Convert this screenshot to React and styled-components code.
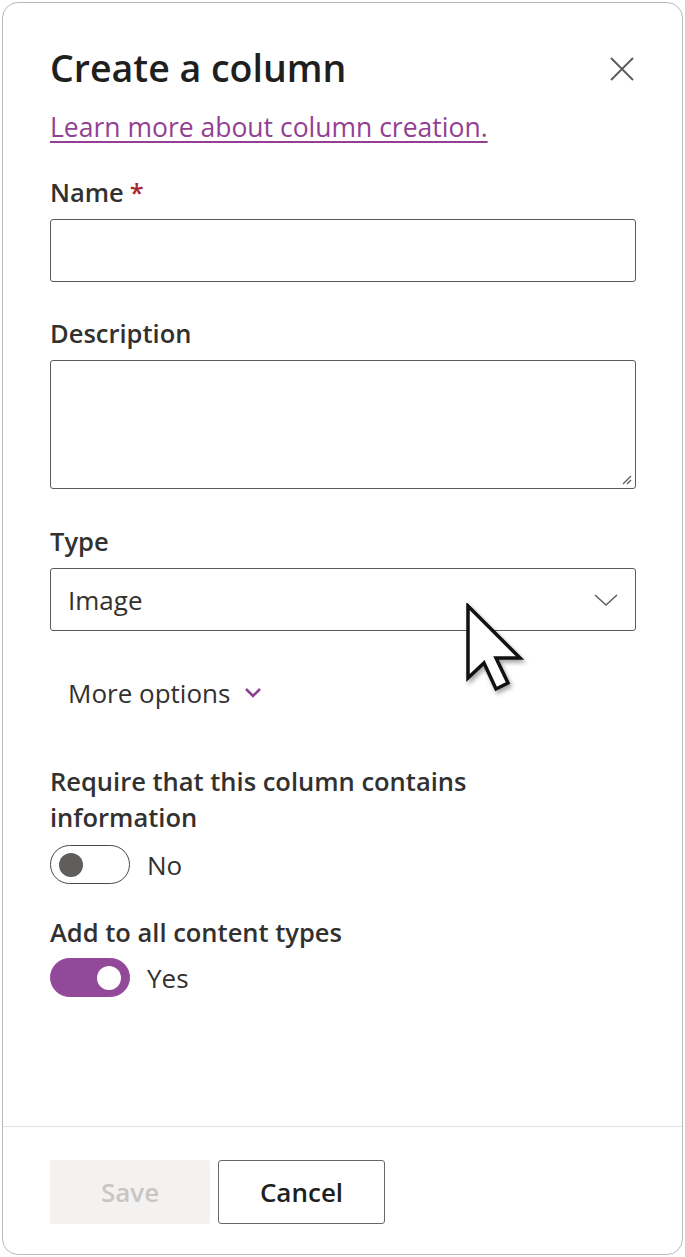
import React from 'react'
import styled, { createGlobalStyle } from 'styled-components'

const GlobalStyle = createGlobalStyle`
  html, body {
    margin: 0;
    padding: 0;
    background: #fff;
  }
  body {
    font-family: 'Open Sans', 'Liberation Sans', sans-serif;
    color: #252423;
  }
`

const Panel = styled.div`
  position: relative;
  box-sizing: border-box;
  margin: 2px;
  width: 681px;
  height: 1253px;
  border: 1.5px solid #b9b9b9;
  border-radius: 16px;
  display: flex;
  flex-direction: column;
  overflow: hidden;
`

const Body = styled.div`
  flex: 1;
  padding: 38px 47px 0 47px;
  display: flex;
  flex-direction: column;
`

const Header = styled.div`
  display: flex;
  align-items: center;
  justify-content: space-between;
  height: 52px;
`

const Title = styled.h1`
  margin: 0;
  font-size: 37.5px;
  font-weight: 600;
  color: #201f1e;
`

const CloseButton = styled.button`
  border: none;
  background: none;
  padding: 0;
  margin: 4px -2px 0 0;
  width: 30px;
  height: 30px;
  display: flex;
  align-items: center;
  justify-content: center;
`

const HelpLink = styled.a`
  display: block;
  align-self: flex-start;
  margin-top: 16px;
  line-height: 36px;
  font-size: 26.5px;
  color: #933f92;
  text-decoration: underline;
  text-underline-offset: 4px;
  text-decoration-thickness: 1.5px;
`

const Label = styled.div`
  margin-top: ${p => p.$top || 0}px;
  font-size: 25.5px;
  font-weight: 600;
  color: #323130;
  line-height: 36px;
`

const Required = styled.span`
  color: #a4262c;
  margin-left: 6px;
`

const Field = styled.div`
  position: relative;
  margin-top: 9px;
  box-sizing: border-box;
  width: 586px;
  height: ${p => p.$h}px;
  border: 1.5px solid #5b5a59;
  border-radius: 3px;
  background: #fff;
  display: flex;
  align-items: center;
  padding: 0 16px 0 17px;
`

const SelectValue = styled.span`
  flex: 1;
  font-size: 26px;
  color: #323130;
`

const Grip = styled.svg`
  position: absolute;
  right: 2px;
  bottom: 2px;
`

const Cursor = styled.svg`
  position: absolute;
  left: 413px;
  top: 34px;
  filter: drop-shadow(2px 3px 2px rgba(0, 0, 0, 0.35));
`

const MoreOptions = styled.div`
  margin-top: 44px;
  margin-left: 18px;
  display: flex;
  align-items: center;
  gap: 14px;
  line-height: 36px;
  font-size: 26px;
  color: #323130;
`

const ToggleRow = styled.div`
  display: flex;
  align-items: center;
  gap: 17px;
  margin-top: ${p => p.$top}px;
  font-size: 26px;
  color: #323130;
`

const Track = styled.div`
  box-sizing: border-box;
  width: 80px;
  height: 39px;
  border-radius: 20px;
  border: 1.5px solid ${p => (p.$on ? '#93499a' : '#4a4948')};
  background: ${p => (p.$on ? '#93499a' : '#fff')};
  display: flex;
  align-items: center;
  justify-content: ${p => (p.$on ? 'flex-end' : 'flex-start')};
  padding: 0 8px;
`

const Knob = styled.div`
  width: 24px;
  height: 24px;
  border-radius: 50%;
  background: ${p => (p.$on ? '#fff' : '#5f5e5d')};
`

const Footer = styled.div`
  border-top: 1.5px solid #e3e3e3;
  height: 128px;
  box-sizing: border-box;
  padding: 33px 47px 0 47px;
  display: flex;
  gap: 8px;
`

const Button = styled.button`
  box-sizing: border-box;
  height: 64px;
  width: ${p => p.$w}px;
  border-radius: 3px;
  font-family: inherit;
  font-size: 26px;
  font-weight: 600;
  border: ${p => (p.$disabled ? 'none' : '1.5px solid #6a6968')};
  background: ${p => (p.$disabled ? '#f3f2f1' : '#fff')};
  color: ${p => (p.$disabled ? '#c8c6c4' : '#201f1e')};
`

const Toggle = ({ on, label, top }) => (
  <ToggleRow $top={top}>
    <Track $on={on}>
      <Knob $on={on} />
    </Track>
    <span>{label}</span>
  </ToggleRow>
)

const App = () => (
  <>
    <GlobalStyle />
    <Panel>
      <Body>
        <Header>
          <Title>Create a column</Title>
          <CloseButton aria-label="Close">
            <svg width="26" height="26" viewBox="0 0 26 26">
              <path d="M2 2 L24 24 M24 2 L2 24" stroke="#605e5c" strokeWidth="2" fill="none" />
            </svg>
          </CloseButton>
        </Header>
        <HelpLink href="#">Learn more about column creation.</HelpLink>

        <Label $top={29}>
          Name<Required>*</Required>
        </Label>
        <Field $h={63} />

        <Label $top={33}>Description</Label>
        <Field $h={129}>
          <Grip width="14" height="14" viewBox="0 0 14 14">
            <path d="M12 4 L4 12 M12 8 L8 12" stroke="#605e5c" strokeWidth="1.3" />
          </Grip>
        </Field>

        <Label $top={34}>Type</Label>
        <Field $h={63}>
          <SelectValue>Image</SelectValue>
          <svg width="26" height="16" viewBox="0 0 26 16">
            <path d="M2 3 L13 13 L24 3" stroke="#605e5c" strokeWidth="1.5" fill="none" />
          </svg>
          <Cursor width="64" height="92" viewBox="0 0 64 92">
            <path
              d="M4 3 L4 75 L20 60 L32 86 L44 80 L32 55 L56 55 Z"
              fill="#fff"
              stroke="#111"
              strokeWidth="3.5"
              strokeLinejoin="miter"
            />
          </Cursor>
        </Field>

        <MoreOptions>
          More options
          <svg width="18" height="12" viewBox="0 0 18 12">
            <path d="M2 2 L9 9 L16 2" stroke="#8f3f92" strokeWidth="2.6" fill="none" />
          </svg>
        </MoreOptions>

        <Label $top={52}>
          Require that this column contains
          <br />
          information
        </Label>
        <Toggle on={false} label="No" top={10} />

        <Label $top={30}>Add to all content types</Label>
        <Toggle on label="Yes" top={8} />
      </Body>
      <Footer>
        <Button $w={160} $disabled>
          Save
        </Button>
        <Button $w={167}>Cancel</Button>
      </Footer>
    </Panel>
  </>
)

export default App
